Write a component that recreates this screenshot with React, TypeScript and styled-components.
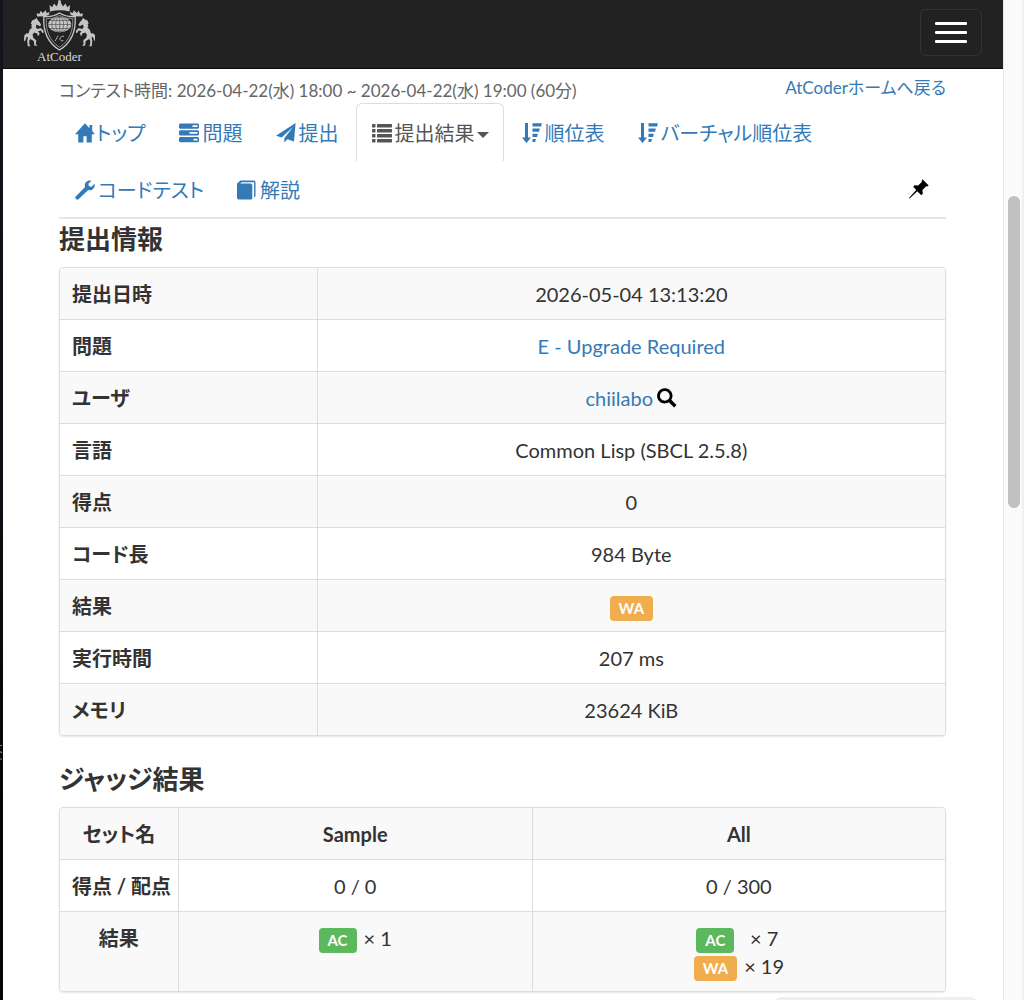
import React from "react";
import styled, { createGlobalStyle } from "styled-components";

const GlobalStyle = createGlobalStyle`
  *, *::before, *::after { box-sizing: border-box; }
  body {
    margin: 0;
    background: #fff;
    color: #333;
    font-family: Lato, "Noto Sans CJK JP", sans-serif;
    font-size: 20px;
    line-height: 28px;
    font-feature-settings: "palt";
  }
  a { color: #337ab7; text-decoration: none; }
`;

const Screen = styled.div`
  display: grid;
  grid-template-columns: 3px minmax(0, 1fr) 21px;
  height: 100vh;
  overflow: hidden;
  position: relative;
`;

const DesktopEdge = styled.div`
  background: linear-gradient(#14141c, #0e0e14 50%, #050506 80%);
  padding-top: 742px;
  svg { display: block; }
`;

const ScrollTrack = styled.div`
  background: #fafafa;
  border-left: 1px solid #e8e8e8;
  box-shadow: inset -2px 0 #f0f0f0;
  padding: 196px 4px 0;
`;

const ScrollThumb = styled.div`
  width: 12px;
  height: 312px;
  border-radius: 6px;
  background: #c1c1c1;
`;

const StatusBubble = styled.div`
  position: absolute;
  right: 46px;
  bottom: -25px;
  width: 204px;
  height: 28px;
  border-radius: 8px;
  background: #efefef;
`;

const Navbar = styled.header`
  display: flex;
  justify-content: space-between;
  align-items: flex-start;
  height: 69px;
  padding: 0 21px;
  background: #222;
  border-bottom: 1px solid #080808;
`;

const Brand = styled.a`
  display: block;
  svg { display: block; }
`;

const MenuButton = styled.button`
  display: flex;
  flex-direction: column;
  gap: 6px;
  margin-top: 9px;
  padding: 12px 14px;
  border: 1px solid #333;
  border-radius: 6px;
  background: transparent;
`;

const MenuBar = styled.span`
  width: 32px;
  height: 3px;
  border-radius: 1px;
  background: #fff;
`;

const Main = styled.main`
  padding: 0 57px 0 56px;
`;

const ContestBar = styled.div`
  display: flex;
  justify-content: space-between;
  height: 34px;
  padding-top: 7px;
  font-size: 17px;
  line-height: 24px;
`;

const ContestTime = styled.small`
  font-size: 17px;
  color: #666;
  padding-top: 3px;
`;

const Tabs = styled.ul`
  display: flex;
  flex-wrap: wrap;
  list-style: none;
  margin: 0;
  padding: 0;
  border-bottom: 2px solid #e5e5e5;
`;

const TabItem = styled.li<{ $end?: boolean }>`
  margin-left: ${(p) => (p.$end ? "auto" : "0")};
  margin-right: 2px;
  margin-bottom: -1px;
`;

const TabLink = styled.a<{ $active?: boolean }>`
  display: flex;
  align-items: center;
  padding: 15px 14px 14px 15px;
  border: 1px solid ${(p) => (p.$active ? "#ddd" : "transparent")};
  border-bottom: 0;
  border-radius: 6px 6px 0 0;
  color: ${(p) => (p.$active ? "#555" : "#337ab7")};
`;

const PinButton = styled.button`
  display: block;
  padding: 19px 15px 0;
  border: 0;
  background: none;
  color: #000;
`;

const Icon = styled.svg<{ $gap?: number }>`
  display: inline-block;
  flex: none;
  width: 20px;
  height: 20px;
  margin-right: ${(p) => p.$gap ?? 0}px;
  fill: currentColor;
`;

const Caret = styled.span`
  margin: 4px 0 0 2px;
  border: 6px solid transparent;
  border-top-color: currentColor;
  border-bottom: 0;
`;

const Heading = styled.h4<{ $first?: boolean }>`
  margin: ${(p) => (p.$first ? "6px" : "29px")} 0 14px;
  font-size: 26px;
  line-height: 28px;
  font-weight: 700;
`;

const DataTable = styled.table`
  width: 100%;
  table-layout: fixed;
  border-collapse: separate;
  border-spacing: 0;
  border: 1px solid #ddd;
  border-radius: 4px;
  box-shadow: 0 1px 2px rgba(0, 0, 0, 0.1);
  overflow: hidden;
  tr:nth-child(odd) { background: #f9f9f9; }
  tr + tr > * { border-top: 1px solid #ddd; }
  tr > * + * { border-left: 1px solid #ddd; }
`;

const Col = styled.col<{ $share: number }>`
  width: ${(p) => p.$share}%;
`;

const HeadCell = styled.th<{ $center?: boolean }>`
  padding: 12px 12px 11px;
  font-weight: 700;
  vertical-align: top;
  white-space: nowrap;
  text-align: ${(p) => (p.$center ? "center" : "left")};
`;

const Cell = styled.td`
  padding: 12px 12px 11px;
  text-align: center;
  vertical-align: top;
`;

const SearchLink = styled.a`
  margin-left: 4px;
  color: #000;
  svg { vertical-align: -2px; }
`;

const Label = styled.span<{ $kind: "AC" | "WA" }>`
  padding: 3px 9px 4px;
  border-radius: 4px;
  background: ${(p) => (p.$kind === "AC" ? "#5cb85c" : "#f0ad4e")};
  color: #fff;
  font-size: 15px;
  line-height: 15px;
  font-weight: 700;
`;

const Tally = styled.dl`
  display: inline-grid;
  grid-template-columns: auto auto;
  column-gap: 7px;
  justify-items: center;
  vertical-align: top;
  margin: 0;
  dd { margin: 0; }
`;

const HomeIcon = () => (
  <Icon viewBox="0 0 20 20" $gap={1}>
    <path d="M10 .3 0 11.200h3.200V19.600h5.200v-6.400h3.200v6.400h5.200v-8.400H20L17.200 8V2h-2.700v3.200z" />
  </Icon>
);

const TasksIcon = () => (
  <Icon viewBox="0 0 20 20" $gap={4}>
    <path
      fillRule="evenodd"
      d="M1 .5h18l1 1v3.200l-1 1H1l-1-1V1.500zM13.500 2.200v1.700h5V2.200zM1 7.200h18l1 1v3.400l-1 1H1l-1-1V8.200zM10.500 9v1.800h8V9zM1 14h18l1 1v3.300l-1 1H1l-1-1V15zM14.500 15.700v1.800h4v-1.800z"
    />
  </Icon>
);

const SendIcon = () => (
  <Icon viewBox="0 0 20 20" $gap={3}>
    <path d="M19.600 0 0 12.700l5.700 1.900L17 4 8.300 15.300v4.300l3.100-3.300 6.600 2.200z" />
  </Icon>
);

const ListIcon = () => (
  <Icon viewBox="0 0 20 20" $gap={3}>
    {[1, 6, 11, 16].map((y) => (
      <g key={y}>
        <rect x="0" y={y} width="3.500" height="3.400" rx=".6" />
        <rect x="5" y={y} width="15" height="3.400" rx=".6" />
      </g>
    ))}
  </Icon>
);

const SortIcon = () => (
  <Icon viewBox="0 0 20 20" $gap={3}>
    <path d="M3 0h3v14.500h3L4.500 20 0 14.500h3zM10.500.3h9.300l-.7 3.200h-8.600zM10.500 5.500h7.300l-.7 3.200h-6.600zM10.500 10.700h5.300l-.7 3.200h-4.600zM10.500 15.900h3.400l-.7 3.200h-2.700z" />
  </Icon>
);

const WrenchIcon = () => (
  <Icon viewBox="0 0 20 20" $gap={3}>
    <path d="M16.500.7 13.400 3.700l.6 2.500 2.600.6 3-3.100c.5 2-.1 4.100-1.500 5.300-1.400 1.300-3.200 1.500-4.900 1L3.500 19.200c-.6.600-1.500.6-2 .1l-.9-.9c-.5-.5-.5-1.400.1-2l9.400-9.300c-.6-1.800-.3-3.700 1-5C12.500.6 14.600.1 16.500.7z" />
  </Icon>
);

const BookIcon = () => (
  <Icon viewBox="0 0 20 20" $gap={3}>
    <path d="M3.500.5h13.800l1.200 1.200V16l-1.400 1.500V2.200H4.500L3.200 3.500H14l1.300 1.300v13.700l-1 1H1.200L0 18.300V3.400z" />
  </Icon>
);

const PinIcon = () => (
  <Icon viewBox="0 0 20 20">
    <path d="M13.500.3 19.700 6.500l-1.500 1-1-.3-3.800 3.900.4 3.700-1.500 1.500-4-4L.6 19.400 0 19.500l.2-.8 7-7.800-3-3.200L5.600 6.300l3.600.3L13 2.800l-.3-1z" />
  </Icon>
);

const SearchIcon = () => (
  <Icon viewBox="0 0 20 20">
    <path
      fillRule="evenodd"
      d="M7.800.2a7.600 7.600 0 0 1 6.500 11.600l5.200 5.100-2.400 2.500-5.300-5.200A7.600 7.600 0 1 1 7.800.2zm0 2.800a4.900 4.900 0 1 0 0 9.800 4.900 4.900 0 0 0 0-9.800z"
    />
  </Icon>
);

const Horse = () => (
  <path d="M32 20.500l3-1.200 1.600-1.600.7 1.700 2.500 3 1.400 2.700-1.400 1.200-3.300-1.800-.6 2.600 1.200 2 3.700-1 2.600 2.400 .2 2.400-1.400-.2-1.200-2.200-3 .8 1.600 2 -.8 2.400-1.400-.3 .2-1.700-3.400-1.200-1.600 2 .6 3.200 3 2.600-.2 4 1.400 1.500h-3l-.6-4.700-3.600-2-1 1.800 .2 3.600 1 1.700h-2.600l-.6-5.400 .8-3.200-1.400-.8-1.200 3.500-1.700 1.500 .7-6.600 2.200-2 1.900.2 1.200-3.600 2.700-2.500 -1.200-.4 .6-2.600-1-.5z" />
);

const Logo = () => (
  <svg width="71" height="64" viewBox="24 0 71 64" role="img" aria-label="AtCoder">
    <g fill="#c4c4c4">
      <Horse />
      <g transform="translate(119.5 0) scale(-1 1)">
        <Horse />
      </g>
      <path d="M50 11.500 49.500 5l2.700 2.200L54 3.500l2.600 3L58.500 2h2L63 6.500l2.500-3 1.800 3.700L70 5l-.5 6.500q-9.700-2.500-19.500 0z" />
      <circle cx="59.500" cy="1.600" r="1.500" />
      <path d="M36.500 13.500l3 .2 1.200-3 2 2.200 3-2.600 1 2.600 3-1-1 3-3.500 1.300-8 .3z" />
      <path d="M83 13.500l-3 .2-1.200-3-2 2.200-3-2.600-1 2.600-3-1 1 3 3.500 1.300 8 .3z" />
      <ellipse cx="59.700" cy="24.500" rx="11.500" ry="7.800" />
    </g>
    <g fill="none" stroke="#c8c8c8">
      <path strokeWidth="1.300" d="M43.800 16.500Q52 17.500 59.500 13q7.500 4.500 15.700 3.500c.8 14-3.200 26-15.700 33.500C47 42.500 43 30.500 43.800 16.500z" />
      <path strokeWidth=".8" stroke="#a8a8a8" d="M46.200 18.700q7 .4 13.300-3.200 6.300 3.600 13.300 3.200c.4 12-3.200 22-13.300 28.600C49.400 40.700 45.800 30.700 46.200 18.700z" />
    </g>
    <g fill="none" stroke="#444" strokeWidth=".6">
      <path d="M48 24.500h23.500M50 20.500h19.500M50 28.500h19.500M59.700 16.500v16" />
      <ellipse cx="59.700" cy="24.500" rx="4" ry="7.800" />
      <ellipse cx="59.700" cy="24.500" rx="8" ry="7.800" />
    </g>
    <path d="M55 41.200l3.200-5.600M64 36.300h-2.400l-1.600 1.600v1.500l1.200 1.300h2.200" fill="none" stroke="#aaa" strokeWidth="1" />
    <text x="59.500" y="60.500" textAnchor="middle" fill="#d8d8d8" fontFamily="Liberation Serif, serif" fontSize="13">
      AtCoder
    </text>
  </svg>
);

const tabs = [
  { text: "トップ", icon: <HomeIcon /> },
  { text: "問題", icon: <TasksIcon /> },
  { text: "提出", icon: <SendIcon /> },
  { text: "提出結果", icon: <ListIcon />, active: true },
  { text: "順位表", icon: <SortIcon /> },
  { text: "バーチャル順位表", icon: <SortIcon /> },
  { text: "コードテスト", icon: <WrenchIcon /> },
  { text: "解説", icon: <BookIcon /> },
];

const details: { name: string; value: React.ReactNode }[] = [
  { name: "提出日時", value: "2026-05-04 13:13:20" },
  { name: "問題", value: <a href="#task">E - Upgrade Required</a> },
  {
    name: "ユーザ",
    value: (
      <>
        <a href="#user">chiilabo</a>
        <SearchLink href="#search" aria-label="chiilabo"><SearchIcon /></SearchLink>
      </>
    ),
  },
  { name: "言語", value: "Common Lisp (SBCL 2.5.8)" },
  { name: "得点", value: "0" },
  { name: "コード長", value: "984 Byte" },
  { name: "結果", value: <Label $kind="WA">WA</Label> },
  { name: "実行時間", value: "207 ms" },
  { name: "メモリ", value: "23624 KiB" },
];

export default function App() {
  return (
    <>
      <GlobalStyle />
      <Screen>
        <DesktopEdge>
          <svg width="3" height="20" viewBox="0 0 3 20">
            <path d="M0 3.500h2M0 9.500l2 1.500M0 17h2" stroke="#8a8560" strokeWidth="1.200" fill="none" />
          </svg>
        </DesktopEdge>
        <div>
          <Navbar>
            <Brand href="#home"><Logo /></Brand>
            <MenuButton type="button" aria-label="メニュー">
              <MenuBar />
              <MenuBar />
              <MenuBar />
            </MenuButton>
          </Navbar>
          <Main>
            <ContestBar>
              <ContestTime>コンテスト時間: 2026-04-22(水) 18:00 ~ 2026-04-22(水) 19:00 (60分)</ContestTime>
              <a href="#home">AtCoderホームへ戻る</a>
            </ContestBar>
            <nav>
              <Tabs>
                {tabs.map((tab) => (
                  <TabItem key={tab.text}>
                    <TabLink href="#tab" $active={tab.active}>
                      {tab.icon}
                      {tab.text}
                      {tab.active && <Caret />}
                    </TabLink>
                  </TabItem>
                ))}
                <TabItem $end>
                  <PinButton type="button" aria-label="固定"><PinIcon /></PinButton>
                </TabItem>
              </Tabs>
            </nav>

            <Heading $first>提出情報</Heading>
            <DataTable>
              <colgroup>
                <Col $share={29} />
                <Col $share={71} />
              </colgroup>
              <tbody>
                {details.map((row) => (
                  <tr key={row.name}>
                    <HeadCell scope="row">{row.name}</HeadCell>
                    <Cell>{row.value}</Cell>
                  </tr>
                ))}
              </tbody>
            </DataTable>

            <Heading>ジャッジ結果</Heading>
            <DataTable>
              <colgroup>
                <Col $share={13.3} />
                <Col $share={40} />
                <Col $share={46.7} />
              </colgroup>
              <tbody>
                <tr>
                  <HeadCell $center scope="col">セット名</HeadCell>
                  <HeadCell $center scope="col">Sample</HeadCell>
                  <HeadCell $center scope="col">All</HeadCell>
                </tr>
                <tr>
                  <HeadCell $center scope="row">得点 / 配点</HeadCell>
                  <Cell>0 / 0</Cell>
                  <Cell>0 / 300</Cell>
                </tr>
                <tr>
                  <HeadCell $center scope="row">結果</HeadCell>
                  <Cell>
                    <Tally>
                      <dt><Label $kind="AC">AC</Label></dt>
                      <dd>× 1</dd>
                    </Tally>
                  </Cell>
                  <Cell>
                    <Tally>
                      <dt><Label $kind="AC">AC</Label></dt>
                      <dd>× 7</dd>
                      <dt><Label $kind="WA">WA</Label></dt>
                      <dd>× 19</dd>
                    </Tally>
                  </Cell>
                </tr>
              </tbody>
            </DataTable>
          </Main>
        </div>
        <ScrollTrack><ScrollThumb /></ScrollTrack>
        <StatusBubble />
      </Screen>
    </>
  );
}
